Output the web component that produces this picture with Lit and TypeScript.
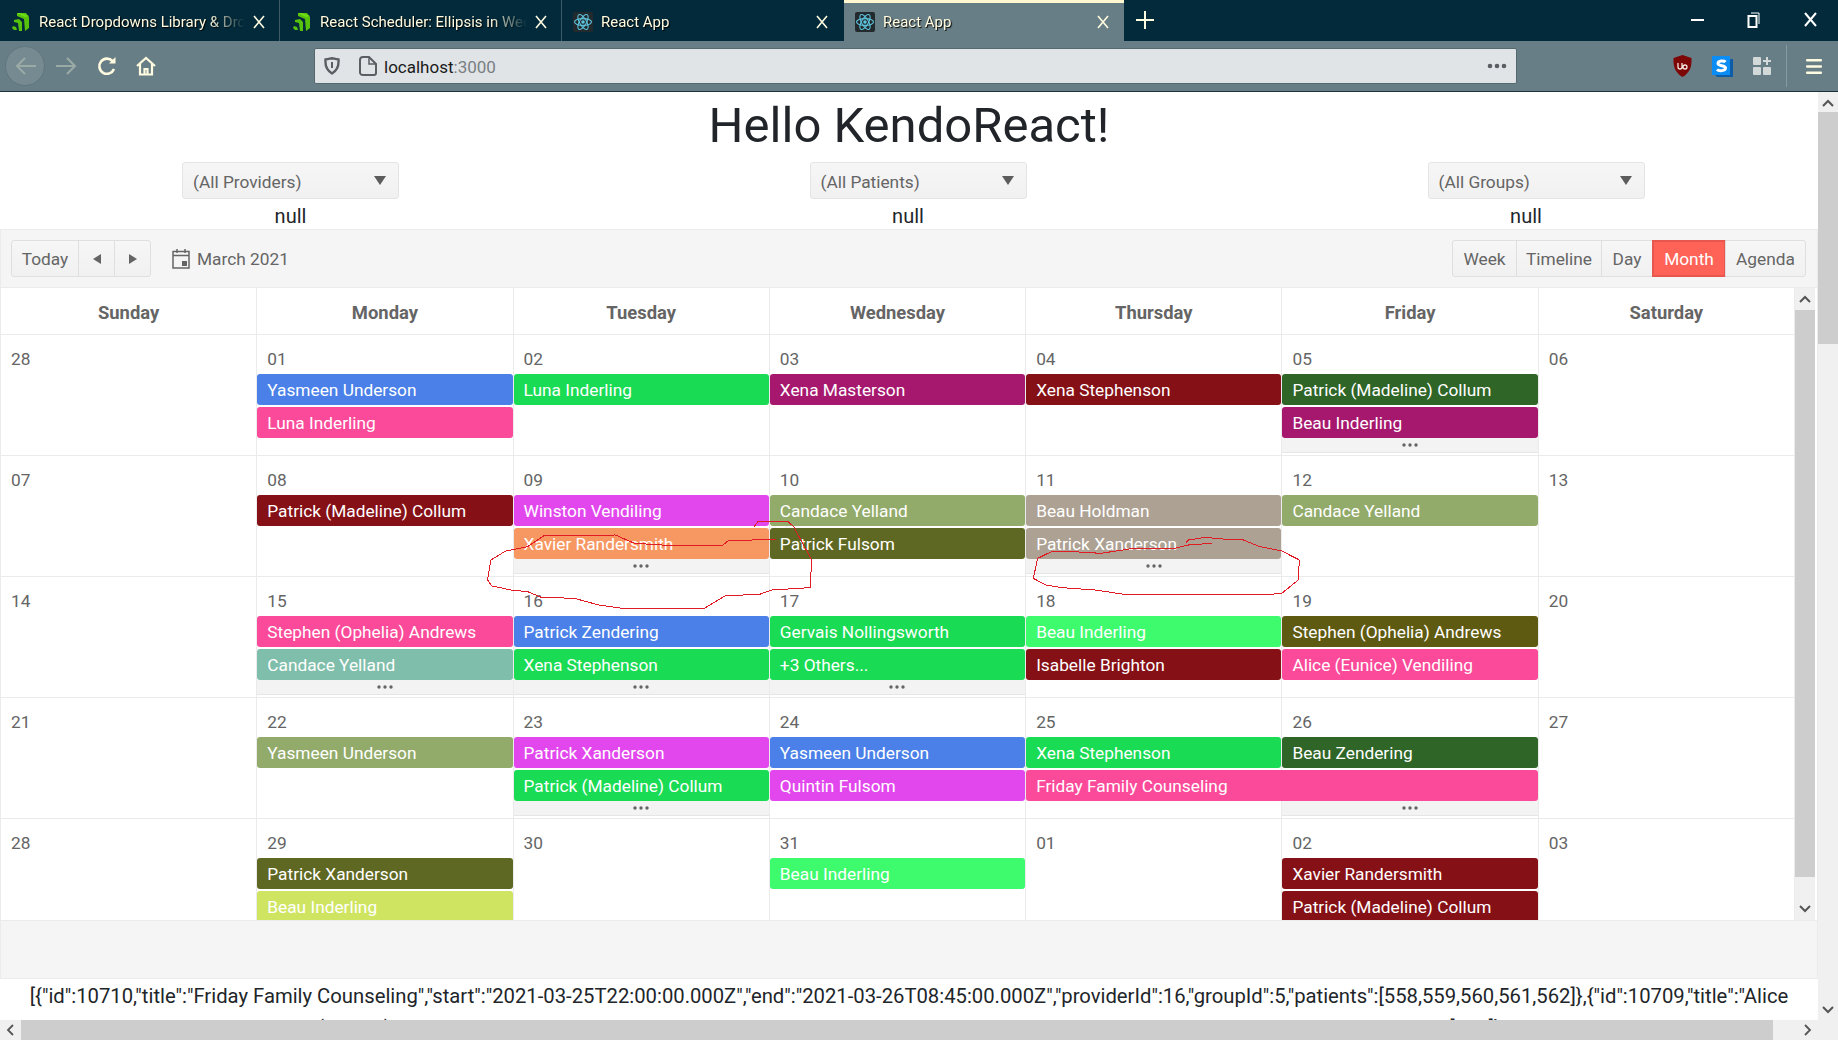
import {LitElement, html, css, svg} from 'lit';
import {customElement} from 'lit/decorators.js';

const BLUE = '#4a80e8';
const PINK = '#fb4a9a';
const GREEN = '#1adb54';
const PLUM = '#a6186e';
const RED = '#851016';
const FOREST = '#2f6527';
const MAGENTA = '#e247ee';
const OLIVE = '#5f6822';
const SAGE = '#93ab6a';
const STONE = '#ada193';
const LIME = '#3efb6e';

interface Ev {
  col: number;
  row: number;
  title: string;
  color: string;
  span?: number;
}

interface Week {
  dates: string[];
  events: Ev[];
  more: number[];
}

const weeks: Week[] = [
  {
    dates: ['28', '01', '02', '03', '04', '05', '06'],
    events: [
      {col: 2, row: 1, title: 'Yasmeen Underson', color: BLUE},
      {col: 2, row: 2, title: 'Luna Inderling', color: PINK},
      {col: 3, row: 1, title: 'Luna Inderling', color: GREEN},
      {col: 4, row: 1, title: 'Xena Masterson', color: PLUM},
      {col: 5, row: 1, title: 'Xena Stephenson', color: RED},
      {col: 6, row: 1, title: 'Patrick (Madeline) Collum', color: FOREST},
      {col: 6, row: 2, title: 'Beau Inderling', color: PLUM},
    ],
    more: [6],
  },
  {
    dates: ['07', '08', '09', '10', '11', '12', '13'],
    events: [
      {col: 2, row: 1, title: 'Patrick (Madeline) Collum', color: RED},
      {col: 3, row: 1, title: 'Winston Vendiling', color: MAGENTA},
      {col: 3, row: 2, title: 'Xavier Randersmith', color: '#f79762'},
      {col: 4, row: 1, title: 'Candace Yelland', color: SAGE},
      {col: 4, row: 2, title: 'Patrick Fulsom', color: OLIVE},
      {col: 5, row: 1, title: 'Beau Holdman', color: STONE},
      {col: 5, row: 2, title: 'Patrick Xanderson', color: STONE},
      {col: 6, row: 1, title: 'Candace Yelland', color: SAGE},
    ],
    more: [3, 5],
  },
  {
    dates: ['14', '15', '16', '17', '18', '19', '20'],
    events: [
      {col: 2, row: 1, title: 'Stephen (Ophelia) Andrews', color: PINK},
      {col: 2, row: 2, title: 'Candace Yelland', color: '#7fbeaa'},
      {col: 3, row: 1, title: 'Patrick Zendering', color: BLUE},
      {col: 3, row: 2, title: 'Xena Stephenson', color: GREEN},
      {col: 4, row: 1, title: 'Gervais Nollingsworth', color: GREEN},
      {col: 4, row: 2, title: '+3 Others...', color: GREEN},
      {col: 5, row: 1, title: 'Beau Inderling', color: LIME},
      {col: 5, row: 2, title: 'Isabelle Brighton', color: RED},
      {col: 6, row: 1, title: 'Stephen (Ophelia) Andrews', color: '#5f5a12'},
      {col: 6, row: 2, title: 'Alice (Eunice) Vendiling', color: PINK},
    ],
    more: [2, 3, 4],
  },
  {
    dates: ['21', '22', '23', '24', '25', '26', '27'],
    events: [
      {col: 2, row: 1, title: 'Yasmeen Underson', color: SAGE},
      {col: 3, row: 1, title: 'Patrick Xanderson', color: MAGENTA},
      {col: 3, row: 2, title: 'Patrick (Madeline) Collum', color: GREEN},
      {col: 4, row: 1, title: 'Yasmeen Underson', color: BLUE},
      {col: 4, row: 2, title: 'Quintin Fulsom', color: MAGENTA},
      {col: 5, row: 1, title: 'Xena Stephenson', color: GREEN},
      {col: 5, row: 2, span: 2, title: 'Friday Family Counseling', color: PINK},
      {col: 6, row: 1, title: 'Beau Zendering', color: FOREST},
    ],
    more: [3, 6],
  },
  {
    dates: ['28', '29', '30', '31', '01', '02', '03'],
    events: [
      {col: 2, row: 1, title: 'Patrick Xanderson', color: OLIVE},
      {col: 2, row: 2, title: 'Beau Inderling', color: '#cfe562'},
      {col: 4, row: 1, title: 'Beau Inderling', color: LIME},
      {col: 6, row: 1, title: 'Xavier Randersmith', color: RED},
      {col: 6, row: 2, title: 'Patrick (Madeline) Collum', color: RED},
    ],
    more: [],
  },
];

const days = ['Sunday', 'Monday', 'Tuesday', 'Wednesday', 'Thursday', 'Friday', 'Saturday'];

const kendoIcon = html`<svg class="fav" viewBox="0 0 20 20">
  <path fill="#57c20c" d="M6 1l9-0 3 4v11l-4 3-1-12-7-3z" />
  <path fill="#6fe016" d="M6 1l8 4 4-1-9-3z" />
  <path fill="#57c20c" d="M3 8l5-1 3 3v9l-3 0-1-8-4-1z" />
  <path fill="#57c20c" d="M2 14l3 1 1 3-3 0-2-2z" />
</svg>`;

const reactIcon = html`<svg class="fav" viewBox="0 0 20 20">
  <rect width="20" height="20" rx="2" fill="#222a2e" />
  <g fill="none" stroke="#5ec4de" stroke-width="1.1">
    <ellipse cx="10" cy="10" rx="8.5" ry="3.4" />
    <ellipse cx="10" cy="10" rx="8.5" ry="3.4" transform="rotate(60 10 10)" />
    <ellipse cx="10" cy="10" rx="8.5" ry="3.4" transform="rotate(120 10 10)" />
  </g>
  <circle cx="10" cy="10" r="1.8" fill="#5ec4de" />
</svg>`;

const closeIcon = html`<svg class="x" viewBox="0 0 12 14">
  <path d="M1 1l10 12M11 1L1 13" fill="none" stroke="#fffbe0" stroke-width="1.6" />
</svg>`;

@customElement('browser-chrome')
export class BrowserChrome extends LitElement {
  static styles = css`
    :host {
      display: block;
      font-family: Roboto, 'Open Sans', sans-serif;
    }
    .tabs {
      height: 41px;
      background: #022a3a;
      display: flex;
      color: #fffbe0;
    }
    .tab {
      box-sizing: border-box;
      width: 282px;
      display: flex;
      align-items: center;
      padding: 2px 14px 0 12px;
      border-right: 1px solid #3d5a66;
      font-size: 15px;
      text-shadow: 1px 1px 1px #000;
    }
    .tab.first {
      width: 280px;
      padding-left: 11px;
    }
    .tab.plain {
      border-right: none;
      padding-left: 11px;
      padding-right: 16px;
    }
    .tab.active {
      width: 280px;
      background: #687e86;
      border-top: 3px solid #fff7d0;
      padding: 0 15px 1px 11px;
      border-right: none;
    }
    .fav {
      width: 20px;
      height: 20px;
      flex: none;
      margin-right: 8px;
    }
    .label {
      flex: 1;
      white-space: nowrap;
      overflow: hidden;
      min-width: 0;
      -webkit-mask-image: linear-gradient(to right, #000 82%, transparent 100%);
      mask-image: linear-gradient(to right, #000 82%, transparent 100%);
    }
    .x {
      width: 12px;
      height: 14px;
      flex: none;
      margin-left: 8px;
    }
    .plus {
      width: 20px;
      height: 20px;
      margin: 10px 0 0 11px;
    }
    .controls {
      margin-left: auto;
      display: flex;
      align-items: center;
      gap: 43px;
      padding: 0 21px 2px 0;
    }
    .nav {
      height: 50px;
      background: #687e86;
      border-bottom: 1px solid #1d3038;
      display: flex;
      align-items: center;
      position: relative;
    }
    .back {
      width: 40px;
      height: 40px;
      margin-left: 5px;
      border-radius: 50%;
      background: #758a91;
      border: 1px solid #60757d;
      box-sizing: border-box;
      display: flex;
      align-items: center;
      justify-content: center;
    }
    .nav svg {
      flex: none;
    }
    .fwd {
      margin-left: 11px;
    }
    .reload {
      margin-left: 20px;
    }
    .home {
      margin-left: 19px;
    }
    .urlbar {
      box-sizing: border-box;
      width: 1203px;
      height: 36px;
      margin-left: 158px;
      background: #e0e4e7;
      border: 1px solid #55696f;
      border-radius: 2px;
      display: flex;
      align-items: center;
      padding: 0 9px;
      font-size: 17px;
      color: #1a1a1a;
    }
    .urlbar .shield {
      margin-right: 19px;
    }
    .urlbar .page {
      margin-right: 7px;
    }
    .host {
      padding-top: 2px;
    }
    .port {
      color: #7a7f83;
    }
    .dots {
      margin-left: auto;
      margin-right: 0;
    }
    .addons {
      margin-left: auto;
      display: flex;
      align-items: center;
      padding-right: 16px;
    }
    .sep {
      width: 1px;
      height: 42px;
      background: #889aa0;
      margin: 0 19px 0 15px;
    }
  `;

  render() {
    return html`
      <div class="tabs">
        <div class="tab first">${kendoIcon}<span class="label">React Dropdowns Library &amp; Dropdowns</span>${closeIcon}</div>
        <div class="tab">${kendoIcon}<span class="label">React Scheduler: Ellipsis in Week View</span>${closeIcon}</div>
        <div class="tab plain">${reactIcon}<span class="label">React App</span>${closeIcon}</div>
        <div class="tab active">${reactIcon}<span class="label">React App</span>${closeIcon}</div>
        <svg class="plus" viewBox="0 0 20 20"><path d="M10 1v18M1 10h18" stroke="#fffbe0" stroke-width="2" /></svg>
        <div class="controls">
          <svg width="13" height="14" viewBox="0 0 13 14"><path d="M0 7h13" stroke="#fff" stroke-width="2" /></svg>
          <svg width="14" height="18" viewBox="0 0 14 18" fill="none" stroke="#fff">
            <rect x="1.5" y="5" width="8" height="11" stroke-width="2" />
            <path d="M4 2h8v11" stroke-width="1" />
          </svg>
          <svg width="13" height="15" viewBox="0 0 13 15"><path d="M1 1l11 13M12 1L1 14" stroke="#fff" stroke-width="2" /></svg>
        </div>
      </div>
      <div class="nav">
        <div class="back">
          <svg width="21" height="18" viewBox="0 0 21 18" fill="none" stroke="#9aaba6" stroke-width="2">
            <path d="M21 9H2M10 1L2 9l8 8" />
          </svg>
        </div>
        <svg class="fwd" width="21" height="18" viewBox="0 0 21 18" fill="none" stroke="#9aaba6" stroke-width="2">
          <path d="M0 9h19M11 1l8 8-8 8" />
        </svg>
        <svg class="reload" width="20" height="20" viewBox="0 0 20 20" fill="none" stroke="#fffbe0" stroke-width="2.6">
          <path d="M17 13a7.6 7.6 0 1 1-1.5-8" />
          <path d="M18.5 1v6.5H12" fill="#fffbe0" stroke="none" />
        </svg>
        <svg class="home" width="20" height="20" viewBox="0 0 20 20" fill="none" stroke="#fffbe0" stroke-width="2.2">
          <path d="M1 10l9-8 9 8M4 8v10.500h12V8" />
          <path d="M8.500 18v-5h3v5" />
        </svg>
        <div class="urlbar">
          <svg class="shield" width="16" height="18" viewBox="0 0 16 18" fill="none" stroke="#5a5f63" stroke-width="2.4">
            <path d="M1.500 2.500C5 2 6 1.500 8 1.200 10 1.500 11 2 14.500 2.500 15 9 12.500 14 8 16.500 3.500 14 1 9 1.500 2.500z" />
            <path d="M8 5v6" stroke-width="2" />
          </svg>
          <svg class="page" width="18" height="20" viewBox="0 0 18 20" fill="none" stroke="#5a5f63" stroke-width="2">
            <path d="M4 1h6l7 7v9a2 2 0 0 1-2 2H4a3 3 0 0 1-3-2V4a3 3 0 0 1 3-3z" />
            <path d="M10 1v7h7" stroke-width="1.500" />
          </svg>
          <span class="host">localhost<span class="port">:3000</span></span>
          <svg class="dots" width="20" height="6" viewBox="0 0 20 6" fill="#5a5f63">
            <circle cx="3" cy="3" r="2.300" /><circle cx="10" cy="3" r="2.300" /><circle cx="17" cy="3" r="2.300" />
          </svg>
        </div>
        <div class="addons">
          <svg width="19" height="22" viewBox="0 0 19 22" style="margin-right:20px">
            <path fill="#7d0606" d="M9.500 0l9 3c.500 9-2 15-9 19-7-4-9.500-10-9-19z" />
            <path fill="none" stroke="#f4e6e0" stroke-width="1.300" d="M5 8v4a2 2 0 0 0 4 0V8M14 12a2 2 0 1 1-4 0 2 2 0 1 1 4 0" />
          </svg>
          <svg width="21" height="21" viewBox="0 0 21 21" style="margin-right:20px">
            <path fill="#0d5ca8" d="M3 19h15V3h3v18H5z" />
            <rect width="18" height="19" fill="#0c8cf5" />
            <path fill="none" stroke="#fff" stroke-width="3" d="M13.500 6C12 4.500 6 4.500 6 7.500s7.500 1.500 7.500 4.500S7 15.500 5 13.500" />
          </svg>
          <svg width="18" height="18" viewBox="0 0 18 18" fill="#d3d9d9">
            <rect width="8" height="8" rx="1" /><rect y="10" width="8" height="8" rx="1" /><rect x="10" y="10" width="8" height="8" rx="1" />
            <path d="M13 0h2v3h3v2h-3v3h-2V5h-3V3h3z" />
          </svg>
          <div class="sep"></div>
          <svg width="16" height="15" viewBox="0 0 16 15" fill="#fffbe0">
            <rect width="16" height="2.500" rx="1" /><rect y="6.200" width="16" height="2.500" rx="1" /><rect y="12.500" width="16" height="2.500" rx="1" />
          </svg>
        </div>
      </div>
    `;
  }
}

@customElement('month-scheduler')
export class MonthScheduler extends LitElement {
  static styles = css`
    :host {
      display: block;
      box-sizing: border-box;
      width: 1818px;
      height: 750px;
      border: 1px solid #ebebeb;
      color: #656565;
      font-size: 17.3px;
    }
    .toolbar {
      box-sizing: border-box;
      height: 58px;
      background: #f5f5f5;
      border-bottom: 1px solid #ebebeb;
      display: flex;
      align-items: center;
      padding: 0 11px 0 10px;
    }
    .group {
      display: flex;
    }
    .btn {
      box-sizing: border-box;
      height: 37px;
      display: flex;
      align-items: center;
      justify-content: center;
      background: linear-gradient(#f6f6f6, #f1f1f1);
      border: 1px solid #dfdfdf;
      margin-left: -1px;
      color: #656565;
      white-space: nowrap;
      padding-top: 1px;
    }
    .group .btn:first-child {
      margin-left: 0;
      border-radius: 3px 0 0 3px;
    }
    .group .btn:last-child {
      border-radius: 0 3px 3px 0;
    }
    .btn.on {
      background: #ff6358;
      border: 2px solid #e8574d;
      color: #fff;
    }
    .range {
      display: flex;
      align-items: center;
      gap: 7px;
      margin-left: 21px;
    }
    .view {
      margin-left: auto;
    }
    .head,
    .week {
      display: grid;
      grid-template-columns: repeat(7, 1fr);
    }
    .body {
      display: flex;
      height: 632px;
      overflow: hidden;
    }
    .cols {
      width: 1794px;
      flex: none;
    }
    .head {
      height: 47px;
      box-sizing: border-box;
      border-bottom: 1px solid #ebebeb;
    }
    .head div {
      display: flex;
      align-items: center;
      justify-content: center;
      font-size: 18.4px;
      font-weight: 700;
      padding-top: 2px;
      border-right: 1px solid #ebebeb;
    }
    .months {
      height: 585px;
      overflow: hidden;
    }
    .week {
      height: 121px;
      grid-template-rows: 39px 33px 31px 14px 1fr;
    }
    .cell {
      grid-row: 1 / 6;
      border-right: 1px solid #ebebeb;
      border-bottom: 1px solid #ebebeb;
      padding: 11px 0 0 10px;
      line-height: 26px;
      min-width: 0;
    }
    .event {
      box-sizing: border-box;
      height: 31px;
      margin: 0 1px 0 0;
      padding: 0 10px;
      border-radius: 3px;
      color: #fff;
      line-height: 32px;
      white-space: nowrap;
      overflow: hidden;
      min-width: 0;
    }
    .more {
      margin: 0 1px 0 0;
      height: 14px;
      background: #f3f3f3;
      border-bottom: 1px solid #e6e6e6;
      display: flex;
      align-items: center;
      justify-content: center;
    }
    .rail {
      box-sizing: border-box;
      width: 20px;
      background: #f0f0f0;
      display: flex;
      flex-direction: column;
      align-items: center;
      justify-content: space-between;
      position: relative;
    }
    .rail svg {
      margin: 7px 0;
    }
    .thumb {
      position: absolute;
      left: 0;
      right: 0;
      top: 22px;
      height: 567px;
      background: #cdcdcd;
    }
    .footer {
      box-sizing: border-box;
      height: 58px;
      background: #f5f5f5;
      border-top: 1px solid #ebebeb;
    }
  `;

  renderWeek(week: Week) {
    return html`<div class="week">
      ${week.dates.map(
        (d, i) => html`<div class="cell" style="grid-column:${i + 1}">${d}</div>`
      )}
      ${week.events.map(
        (e) => html`<div
          class="event"
          style="grid-column:${e.col} / span ${e.span ?? 1};grid-row:${e.row + 1};background:${e.color}"
        >${e.title}</div>`
      )}
      ${week.more.map(
        (col) => html`<div class="more" style="grid-column:${col};grid-row:4">
          <svg width="16" height="4" viewBox="0 0 16 4" fill="#656565">
            <circle cx="2" cy="2" r="1.700" /><circle cx="8" cy="2" r="1.700" /><circle cx="14" cy="2" r="1.700" />
          </svg>
        </div>`
      )}
    </div>`;
  }

  render() {
    return html`
      <div class="toolbar">
        <div class="group">
          <div class="btn" style="width:68px">Today</div>
          <div class="btn" style="width:37px">
            <svg width="8" height="10" viewBox="0 0 8 10" fill="#656565"><path d="M8 0v10L0 5z" /></svg>
          </div>
          <div class="btn" style="width:37px">
            <svg width="8" height="10" viewBox="0 0 8 10" fill="#656565"><path d="M0 0v10l8-5z" /></svg>
          </div>
        </div>
        <div class="range">
          <svg width="18" height="20" viewBox="0 0 18 20" fill="none" stroke="#656565" stroke-width="1.500">
            <rect x="1" y="2.500" width="16" height="16.500" />
            <path d="M1 6.500h16M5 0v4M13 0v4" />
            <rect x="10" y="12" width="5" height="5" fill="#656565" stroke="none" />
          </svg>
          <span>March 2021</span>
        </div>
        <div class="group view">
          <div class="btn" style="width:65px">Week</div>
          <div class="btn" style="width:86px">Timeline</div>
          <div class="btn" style="width:52px">Day</div>
          <div class="btn on" style="width:74px">Month</div>
          <div class="btn" style="width:81px">Agenda</div>
        </div>
      </div>
      <div class="body">
        <div class="cols">
          <div class="head">${days.map((d) => html`<div>${d}</div>`)}</div>
          <div class="months">${weeks.map((w) => this.renderWeek(w))}</div>
        </div>
        <div class="rail">
          <div class="thumb"></div>
          <svg width="12" height="8" viewBox="0 0 12 8" fill="none" stroke="#555" stroke-width="2"><path d="M1 7l5-5 5 5" /></svg>
          <svg width="12" height="8" viewBox="0 0 12 8" fill="none" stroke="#555" stroke-width="2"><path d="M1 1l5 5 5-5" /></svg>
        </div>
      </div>
      <div class="footer"></div>
    `;
  }
}

// hand drawn marks on the screenshot, in the coordinates of the zoomed crop
const loopA =
  '558,147 470,153 460,167 370,167 300,160 265,135 135,137 105,170 65,183 38,210 32,270 40,288 75,300 105,305 130,322 190,325 235,345 285,357 425,357 465,318 530,312 550,300 620,293 623,210 590,110 580,95 525,95 517,112';
const loopB =
  '1352,160 1310,165 1285,175 1210,175 1150,190 1100,185 1060,185 1035,205 1027,265 1050,285 1080,293 1140,300 1200,315 1445,315 1480,310 1510,270 1512,210 1480,183 1440,170 1410,150 1380,148 1340,142 1310,150 1305,158';

@customElement('app-root')
export class AppRoot extends LitElement {
  static styles = css`
    :host {
      display: block;
      position: relative;
      width: 1838px;
      height: 1040px;
      overflow: hidden;
      background: #fff;
      font-family: Roboto, 'Open Sans', sans-serif;
    }
    .page {
      display: flex;
      height: 948px;
    }
    .content {
      width: 1818px;
      flex: none;
      display: flex;
      flex-direction: column;
      overflow: hidden;
    }
    .content > * {
      flex: none;
    }
    h1 {
      margin: 0;
      height: 70px;
      font-size: 49px;
      font-weight: 400;
      line-height: 68px;
      text-align: center;
      color: #212529;
    }
    .filters {
      display: grid;
      grid-template-columns: 581px 654px 582px;
      height: 67px;
    }
    .filter {
      display: flex;
      flex-direction: column;
      align-items: center;
      font-size: 20px;
      color: #212529;
    }
    .null {
      line-height: 34px;
    }
    .select {
      box-sizing: border-box;
      width: 217px;
      height: 37px;
      background: linear-gradient(#f6f6f6, #f1f1f1);
      border: 1px solid #e4e4e4;
      border-radius: 3px;
      display: flex;
      align-items: center;
      justify-content: space-between;
      padding: 2px 12px 0 10px;
      color: #656565;
      font-size: 17.3px;
    }
    .select svg {
      margin-top: -2px;
    }
    .select.shift {
      margin-left: 20px;
    }
    .json {
      box-sizing: border-box;
      height: 41px;
      padding-top: 1px;
      overflow: hidden;
      font-size: 20.25px;
      line-height: 32px;
      color: #212529;
      text-align: center;
      white-space: nowrap;
    }
    .hbar {
      height: 20px;
      background: #f0f0f0;
      display: flex;
      align-items: center;
      justify-content: space-between;
      position: relative;
      padding: 0 6px;
    }
    .hthumb {
      position: absolute;
      left: 21px;
      top: 0;
      bottom: 0;
      width: 1752px;
      background: #cdcdcd;
    }
    .vbar {
      width: 20px;
      flex: none;
      background: #f0f0f0;
      display: flex;
      flex-direction: column;
      align-items: center;
      justify-content: space-between;
      padding: 7px 0 26px;
      box-sizing: border-box;
      position: relative;
    }
    .vthumb {
      position: absolute;
      left: 0;
      right: 0;
      top: 20px;
      height: 232px;
      background: #cdcdcd;
    }
    .ink {
      position: absolute;
      left: 0;
      top: 0;
      width: 1838px;
      height: 1040px;
      pointer-events: none;
    }
  `;

  renderSelect(label: string, shift: boolean) {
    return html`<div class="filter">
      <div class="select ${shift ? 'shift' : ''}">
        <span>${label}</span>
        <svg width="12" height="9" viewBox="0 0 12 9" fill="#5c5c5c"><path d="M0 0h12L6 9z" /></svg>
      </div>
      <div class="null">null</div>
    </div>`;
  }

  render() {
    return html`
      <browser-chrome></browser-chrome>
      <div class="page">
        <div class="content">
          <h1>Hello KendoReact!</h1>
          <div class="filters">
            ${this.renderSelect('(All Providers)', false)}
            ${this.renderSelect('(All Patients)', true)}
            ${this.renderSelect('(All Groups)', true)}
          </div>
          <month-scheduler></month-scheduler>
          <div class="json">
            <div>[{"id":10710,"title":"Friday Family Counseling","start":"2021-03-25T22:00:00.000Z","end":"2021-03-26T08:45:00.000Z","providerId":16,"groupId":5,"patients":[558,559,560,561,562]},{"id":10709,"title":"Alice</div>
            <div>(Eunice) Vendiling","start":"2021-03-26T13:00:00.000Z","end":"2021-03-26T13:50:00.000Z","providerId":4,"groupId":null,"patients":[412]}</div>
          </div>
          <div class="hbar">
            <div class="hthumb"></div>
            <svg width="8" height="12" viewBox="0 0 8 12" fill="none" stroke="#555" stroke-width="1.800"><path d="M7 1L2 6l5 5" /></svg>
            <svg width="8" height="12" viewBox="0 0 8 12" fill="none" stroke="#555" stroke-width="1.800"><path d="M1 1l5 5-5 5" /></svg>
          </div>
        </div>
        <div class="vbar">
          <div class="vthumb"></div>
          <svg width="12" height="8" viewBox="0 0 12 8" fill="none" stroke="#555" stroke-width="2"><path d="M1 7l5-5 5 5" /></svg>
          <svg width="12" height="8" viewBox="0 0 12 8" fill="none" stroke="#555" stroke-width="2"><path d="M1 1l5 5-5 5" transform="rotate(90 6 4) translate(2 -2)" /></svg>
        </div>
      </div>
      <svg class="ink" viewBox="0 0 1838 1040">
        ${svg`<g transform="translate(470 490) scale(.5485 .3333)" fill="none" stroke="#e01b24" shape-rendering="crispEdges">
          <polyline points=${loopA} vector-effect="non-scaling-stroke" />
          <polyline points=${loopB} vector-effect="non-scaling-stroke" />
        </g>`}
      </svg>
    `;
  }
}
